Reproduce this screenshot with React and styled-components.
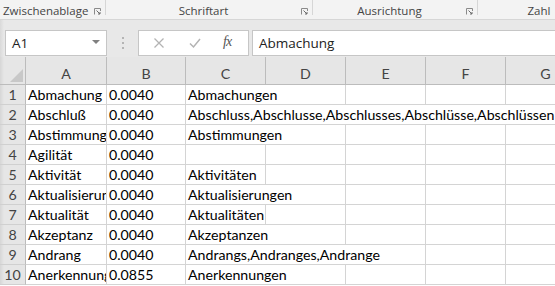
import React from "react";
import styled, { createGlobalStyle } from "styled-components";

const GlobalStyle = createGlobalStyle`
  html, body { margin: 0; padding: 0; background: #ffffff; overflow: hidden; }
  body { width: 555px; height: 286px; }
`;

const Page = styled.div`
  width: 555px;
  height: 286px;
  overflow: hidden;
  position: relative;
  background: #ffffff;
`;

/* ---------- Ribbon ---------- */
const Ribbon = styled.div`
  display: flex;
  height: 19px;
  background: #f3f3f3;
  border-bottom: 1px solid #d6d6d6;
  font-family: "Open Sans", "Noto Sans", sans-serif;
  font-size: 11.5px;
  color: #444444;
`;

const Group = styled.div`
  flex: 0 0 ${(p) => p.$w}px;
  display: flex;
  align-items: center;
  height: 15px;
  padding-top: 1px;
  border-right: ${(p) => (p.$last ? "none" : "1px solid #d6d6d6")};
  box-sizing: border-box;
`;

const GroupLabel = styled.span`
  flex: 1;
  text-align: ${(p) => p.$align || "center"};
  padding-left: ${(p) => p.$pl || 0}px;
  white-space: nowrap;
  margin-top: 5px;
`;

const LauncherIcon = styled.svg`
  flex: 0 0 auto;
  width: 7px;
  height: 7px;
  margin-right: ${(p) => p.$mr || 4}px;
  margin-top: 7px;
`;

const Launcher = ({ mr }) => (
  <LauncherIcon $mr={mr} viewBox="0 0 7 7">
    <path d="M0.5 6.5 V0.5 H6.5 V3" fill="none" stroke="#8a8a8a" strokeWidth="1" />
    <path d="M2.5 2.5 L6 6 M6 4 V6 H4" fill="none" stroke="#6a6a6a" strokeWidth="1" />
  </LauncherIcon>
);

/* ---------- Formula bar ---------- */
const Bar = styled.div`
  display: flex;
  align-items: flex-start;
  height: 37px;
  padding: 10px 0 0 5px;
  box-sizing: border-box;
  background: linear-gradient(to right, #d9d9d9 0px, #e8e8e8 4px, #e8e8e8 100%);
  overflow: hidden;
`;

const NameBox = styled.div`
  width: 102px;
  height: 26px;
  box-sizing: border-box;
  background: #ffffff;
  border: 1px solid #c6c6c6;
  display: flex;
  align-items: center;
  justify-content: space-between;
  padding: 0 6px 0 6px;
  font-family: "Open Sans", "Noto Sans", sans-serif;
  font-size: 13.5px;
  color: #222;
`;

const DropArrow = styled.span`
  width: 0;
  height: 0;
  border-left: 4px solid transparent;
  border-right: 4px solid transparent;
  border-top: 4px solid #808080;
  margin-top: -2px;
`;

const Grip = styled.div`
  width: 31px;
  height: 26px;
  display: flex;
  flex-direction: column;
  align-items: center;
  justify-content: center;
  gap: 3px;
`;

const GripDot = styled.span`
  width: 2px;
  height: 2px;
  background: #b4b4b4;
`;

const FxBox = styled.div`
  width: 111px;
  height: 26px;
  box-sizing: border-box;
  background: #ffffff;
  border: 1px solid #c6c6c6;
  display: flex;
  align-items: center;
  padding-left: 14px;
`;

const FxIcon = styled.svg`
  width: 12px;
  height: 12px;
  margin-right: ${(p) => p.$mr}px;
`;

const FxText = styled.span`
  font-family: "Liberation Serif", "DejaVu Serif", serif;
  font-style: italic;
  font-size: 14px;
  color: #555555;
  letter-spacing: -1px;
  margin-top: -2px;
`;

const FormulaInput = styled.div`
  flex: 1;
  height: 26px;
  margin-left: 3px;
  margin-right: -4px;
  box-sizing: border-box;
  background: #ffffff;
  border: 1px solid #c6c6c6;
  display: flex;
  align-items: center;
  padding-left: 6px;
  font-family: "Open Sans", "Noto Sans", sans-serif;
  font-size: 13.5px;
  color: #222;
`;

/* ---------- Sheet ---------- */
const Sheet = styled.div`
  display: grid;
  grid-template-columns: 26px 81px 79px 80px 80px 80px 80px 80px;
  grid-auto-rows: 20px;
  grid-template-rows: 28px;
  font-family: Lato, "Liberation Sans", sans-serif;
  font-size: 14.2px;
`;

const Corner = styled.div`
  position: relative;
  background: linear-gradient(to right, #d6d6d6 0px, #e6e6e6 4px, #e6e6e6 100%);
  border-right: 1px solid #bcbcbc;
  border-bottom: 1px solid #bcbcbc;
  box-sizing: border-box;
`;

const CornerTriangle = styled.span`
  position: absolute;
  right: 2px;
  bottom: 2px;
  width: 0;
  height: 0;
  border-left: 13px solid transparent;
  border-bottom: 13px solid #c8c8c8;
`;

const ColHeader = styled.div`
  background: #e6e6e6;
  border-right: 1px solid #bcbcbc;
  border-bottom: 1px solid #bcbcbc;
  box-sizing: border-box;
  color: #444444;
  display: flex;
  align-items: flex-end;
  justify-content: center;
  padding-bottom: 1px;
  line-height: 19px;
`;

const RowHeader = styled.div`
  background: linear-gradient(to right, #d6d6d6 0px, #e6e6e6 4px, #e6e6e6 100%);
  border-right: 1px solid #bcbcbc;
  border-bottom: 1px solid #d0d0d0;
  box-sizing: border-box;
  color: #444444;
  text-align: center;
  line-height: 20px;
`;

const Cell = styled.div`
  grid-column: span ${(p) => p.$span || 1};
  border-right: 1px solid #d4d4d4;
  border-bottom: 1px solid #d4d4d4;
  box-sizing: border-box;
  padding: 0 0 0 2px;
  white-space: nowrap;
  overflow: hidden;
  color: #000000;
  line-height: 20px;
  background: #ffffff;
`;

const columns = ["A", "B", "C", "D", "E", "F", "G"];

const rows = [
  { a: "Abmachung", b: "0.0040", c: "Abmachungen", span: 2 },
  { a: "Abschluß", b: "0.0040", c: "Abschluss,Abschlusse,Abschlusses,Abschlüsse,Abschlüssen", span: 5 },
  { a: "Abstimmung", b: "0.0040", c: "Abstimmungen", span: 2 },
  { a: "Agilität", b: "0.0040", c: "", span: 1 },
  { a: "Aktivität", b: "0.0040", c: "Aktivitäten", span: 1 },
  { a: "Aktualisierung", b: "0.0040", c: "Aktualisierungen", span: 2 },
  { a: "Aktualität", b: "0.0040", c: "Aktualitäten", span: 1 },
  { a: "Akzeptanz", b: "0.0040", c: "Akzeptanzen", span: 2 },
  { a: "Andrang", b: "0.0040", c: "Andrangs,Andranges,Andrange", span: 3 },
  { a: "Anerkennung", b: "0.0855", c: "Anerkennungen", span: 2 },
];

export default function App() {
  return (
    <Page>
      <GlobalStyle />
      <Ribbon>
        <Group $w={106}>
          <GroupLabel $align="left" $pl={3}>Zwischenablage</GroupLabel>
          <Launcher mr={4} />
        </Group>
        <Group $w={207}>
          <GroupLabel>Schriftart</GroupLabel>
          <Launcher mr={4} />
        </Group>
        <Group $w={165}>
          <GroupLabel>Ausrichtung</GroupLabel>
          <Launcher mr={4} />
        </Group>
        <Group $w={122} $last>
          <GroupLabel>Zahl</GroupLabel>
        </Group>
      </Ribbon>

      <Bar>
        <NameBox>
          <span>A1</span>
          <DropArrow />
        </NameBox>
        <Grip>
          <GripDot />
          <GripDot />
          <GripDot />
        </Grip>
        <FxBox>
          <FxIcon $mr={24} viewBox="0 0 12 12">
            <path d="M1.5 1.5 L10.5 10.5 M10.5 1.5 L1.5 10.5" stroke="#b3b3b3" strokeWidth="1.3" fill="none" />
          </FxIcon>
          <FxIcon $mr={22} viewBox="0 0 12 12">
            <path d="M1 6.5 L4.5 10 L11 2" stroke="#b3b3b3" strokeWidth="1.5" fill="none" />
          </FxIcon>
          <FxText>fx</FxText>
        </FxBox>
        <FormulaInput>Abmachung</FormulaInput>
      </Bar>

      <Sheet>
        <Corner>
          <CornerTriangle />
        </Corner>
        {columns.map((c) => (
          <ColHeader key={c}>{c}</ColHeader>
        ))}
        {rows.map((r, i) => (
          <React.Fragment key={i}>
            <RowHeader>{i + 1}</RowHeader>
            <Cell>{r.a}</Cell>
            <Cell>{r.b}</Cell>
            <Cell $span={r.span}>{r.c}</Cell>
            {Array.from({ length: 5 - r.span }).map((_, k) => (
              <Cell key={k} />
            ))}
          </React.Fragment>
        ))}
      </Sheet>
    </Page>
  );
}
